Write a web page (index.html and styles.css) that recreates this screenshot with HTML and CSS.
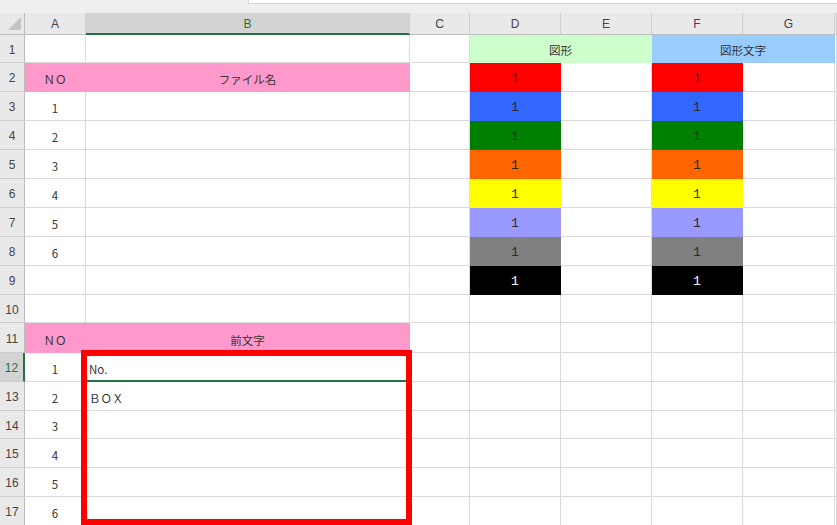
FILE: index.html
```html
<!DOCTYPE html>
<html lang="ja">
<head>
<meta charset="utf-8">
<title>Sheet1</title>
<link rel="stylesheet" href="styles.css">
</head>
<body>
<div class="page">
  <div class="topbar">
    <div class="topbar-gap"></div>
    <div class="formula-edge"></div>
  </div>

  <div class="sheet">
    <!-- column headers -->
    <div class="ch corner"><span class="select-all"></span></div>
    <div class="ch">A</div>
    <div class="ch sel">B</div>
    <div class="ch">C</div>
    <div class="ch">D</div>
    <div class="ch">E</div>
    <div class="ch">F</div>
    <div class="ch">G</div>
    <div class="ch"></div>

    <!-- 1 -->
    <div class="rh">1</div>
    <div class="c"></div><div class="c"></div><div class="c"></div>
    <div class="c span2 mint jp">図形</div>
    <div class="c span2 sky jp">図形文字</div>
    <div class="c"></div>

    <!-- 2 -->
    <div class="rh">2</div>
    <div class="c pink jp">ＮＯ</div><div class="c pink jp">ファイル名</div><div class="c"></div>
    <div class="c num red">1</div><div class="c"></div><div class="c num red">1</div><div class="c"></div><div class="c"></div>

    <!-- 3 -->
    <div class="rh">3</div>
    <div class="c jp">1</div><div class="c"></div><div class="c"></div>
    <div class="c num blue">1</div><div class="c"></div><div class="c num blue">1</div><div class="c"></div><div class="c"></div>

    <!-- 4 -->
    <div class="rh">4</div>
    <div class="c jp">2</div><div class="c"></div><div class="c"></div>
    <div class="c num green">1</div><div class="c"></div><div class="c num green">1</div><div class="c"></div><div class="c"></div>

    <!-- 5 -->
    <div class="rh">5</div>
    <div class="c jp">3</div><div class="c"></div><div class="c"></div>
    <div class="c num orange">1</div><div class="c"></div><div class="c num orange">1</div><div class="c"></div><div class="c"></div>

    <!-- 6 -->
    <div class="rh">6</div>
    <div class="c jp">4</div><div class="c"></div><div class="c"></div>
    <div class="c num yellow">1</div><div class="c"></div><div class="c num yellow">1</div><div class="c"></div><div class="c"></div>

    <!-- 7 -->
    <div class="rh">7</div>
    <div class="c jp">5</div><div class="c"></div><div class="c"></div>
    <div class="c num lavender">1</div><div class="c"></div><div class="c num lavender">1</div><div class="c"></div><div class="c"></div>

    <!-- 8 -->
    <div class="rh">8</div>
    <div class="c jp">6</div><div class="c"></div><div class="c"></div>
    <div class="c num grey">1</div><div class="c"></div><div class="c num grey">1</div><div class="c"></div><div class="c"></div>

    <!-- 9 -->
    <div class="rh">9</div>
    <div class="c"></div><div class="c"></div><div class="c"></div>
    <div class="c num black">1</div><div class="c"></div><div class="c num black">1</div><div class="c"></div><div class="c"></div>

    <!-- 10 -->
    <div class="rh">10</div>
    <div class="c"></div><div class="c"></div><div class="c"></div>
    <div class="c"></div><div class="c"></div><div class="c"></div><div class="c"></div><div class="c"></div>

    <!-- 11 -->
    <div class="rh">11</div>
    <div class="c pink jp">ＮＯ</div><div class="c pink jp">前文字</div><div class="c"></div>
    <div class="c"></div><div class="c"></div><div class="c"></div><div class="c"></div><div class="c"></div>

    <!-- 12 -->
    <div class="rh sel">12</div>
    <div class="c jp">1</div><div class="c left active jp">No.</div><div class="c"></div>
    <div class="c"></div><div class="c"></div><div class="c"></div><div class="c"></div><div class="c"></div>

    <!-- 13 -->
    <div class="rh">13</div>
    <div class="c jp">2</div><div class="c left jp">ＢＯＸ</div><div class="c"></div>
    <div class="c"></div><div class="c"></div><div class="c"></div><div class="c"></div><div class="c"></div>

    <!-- 14 -->
    <div class="rh">14</div>
    <div class="c jp">3</div><div class="c"></div><div class="c"></div>
    <div class="c"></div><div class="c"></div><div class="c"></div><div class="c"></div><div class="c"></div>

    <!-- 15 -->
    <div class="rh">15</div>
    <div class="c jp">4</div><div class="c"></div><div class="c"></div>
    <div class="c"></div><div class="c"></div><div class="c"></div><div class="c"></div><div class="c"></div>

    <!-- 16 -->
    <div class="rh">16</div>
    <div class="c jp">5</div><div class="c"></div><div class="c"></div>
    <div class="c"></div><div class="c"></div><div class="c"></div><div class="c"></div><div class="c"></div>

    <!-- 17 -->
    <div class="rh">17</div>
    <div class="c jp">6</div><div class="c"></div><div class="c"></div>
    <div class="c"></div><div class="c"></div><div class="c"></div><div class="c"></div><div class="c"></div>
  </div>

  <!-- red rectangle shape drawn over B12:B17 -->
  <div class="frame-shape"></div>
</div>
</body>
</html>
```

FILE: styles.css
```css
* { box-sizing: border-box; }

html, body {
  margin: 0;
  padding: 0;
  background: #ffffff;
  overflow: hidden;
}

.page {
  position: relative;
  width: 837px;
  height: 525px;
  overflow: hidden;
  font-family: "Liberation Sans", "Noto Sans CJK JP", sans-serif;
  color: #262626;
}

/* strip under the formula bar */
.topbar {
  display: flex;
  height: 13px;
  background: #efefef;
}
.topbar-gap { width: 248px; }
.formula-edge {
  flex: 1;
  height: 4px;
  background: #ffffff;
  border-bottom: 1px solid #d6d6d6;
  border-left: 1px solid #d6d6d6;
}

/* worksheet grid */
.sheet {
  display: grid;
  grid-template-columns: 25px 61px 324px 60px 91px 91px 91px 92px 1fr;
  grid-template-rows:
    22px 28px 29px 29px 29px 29px 29px 29px 29px 29px
    28px 30px 29px 29px 28px 29px 29px 29px;
}

/* column headers */
.ch {
  display: flex;
  align-items: center;
  justify-content: center;
  background: #e9e9e9;
  border-right: 1px solid #cdcdcd;
  border-bottom: 1px solid #bcbcbc;
  font-size: 12px;
  color: #444444;
  padding-top: 1px;
}
.ch.sel {
  background: #d3d3d3;
  color: #217346;
  border-bottom: 2px solid #217346;
}
.ch.corner {
  position: relative;
  border-right-color: #bcbcbc;
}
.select-all {
  position: absolute;
  right: 3px;
  bottom: 4px;
  width: 13px;
  height: 13px;
  background: #c4c4c4;
  clip-path: polygon(100% 0, 100% 100%, 0 100%);
}

/* row headers */
.rh {
  display: flex;
  align-items: center;
  justify-content: center;
  background: #e9e9e9;
  border-right: 1px solid #bcbcbc;
  border-bottom: 1px solid #cdcdcd;
  font-size: 12px;
  color: #444444;
  padding-top: 2px;
}
.rh.sel {
  background: #d3d3d3;
  color: #217346;
  border-right: 2px solid #217346;
}

/* cells */
.c {
  display: flex;
  align-items: flex-end;
  justify-content: center;
  border-right: 1px solid #dadada;
  border-bottom: 1px solid #dadada;
  font-size: 12px;
  line-height: 16px;
  padding-bottom: 4px;
  white-space: nowrap;
}
.c.left {
  justify-content: flex-start;
  padding-left: 3px;
}
.c.active {
  border-bottom: 2px solid #217346;
  padding-bottom: 3px;
}
.span2 { grid-column: span 2; }

.jp {
  font-family: "Noto Sans CJK JP", "Liberation Sans", sans-serif;
  font-size: 11.5px;
  color: #333333;
}

.num {
  font-family: "Liberation Mono", "DejaVu Sans Mono", monospace;
  font-size: 13px;
  color: #2b2b2b;
}

/* fills: a filled cell hides its own gridlines */
.pink     { background: #ff99cc; border-color: #ff99cc; }
.mint     { background: #ccffcc; border-color: #ccffcc; }
.sky      { background: #99ccff; border-color: #99ccff; }
.red      { background: #ff0000; border-color: #ff0000; }
.blue     { background: #3366ff; border-color: #3366ff; }
.green    { background: #008000; border-color: #008000; }
.orange   { background: #ff6600; border-color: #ff6600; }
.yellow   { background: #ffff00; border-color: #ffff00; }
.lavender { background: #9999ff; border-color: #9999ff; }
.grey     { background: #808080; border-color: #808080; }
.black    { background: #000000; border-color: #000000; color: #ffffff; }

/* rectangle shape drawn on top of the sheet */
.frame-shape {
  position: absolute;
  left: 81px;
  top: 350px;
  width: 331px;
  height: 175px;
  border: 6px solid #ff0000;
}
```
